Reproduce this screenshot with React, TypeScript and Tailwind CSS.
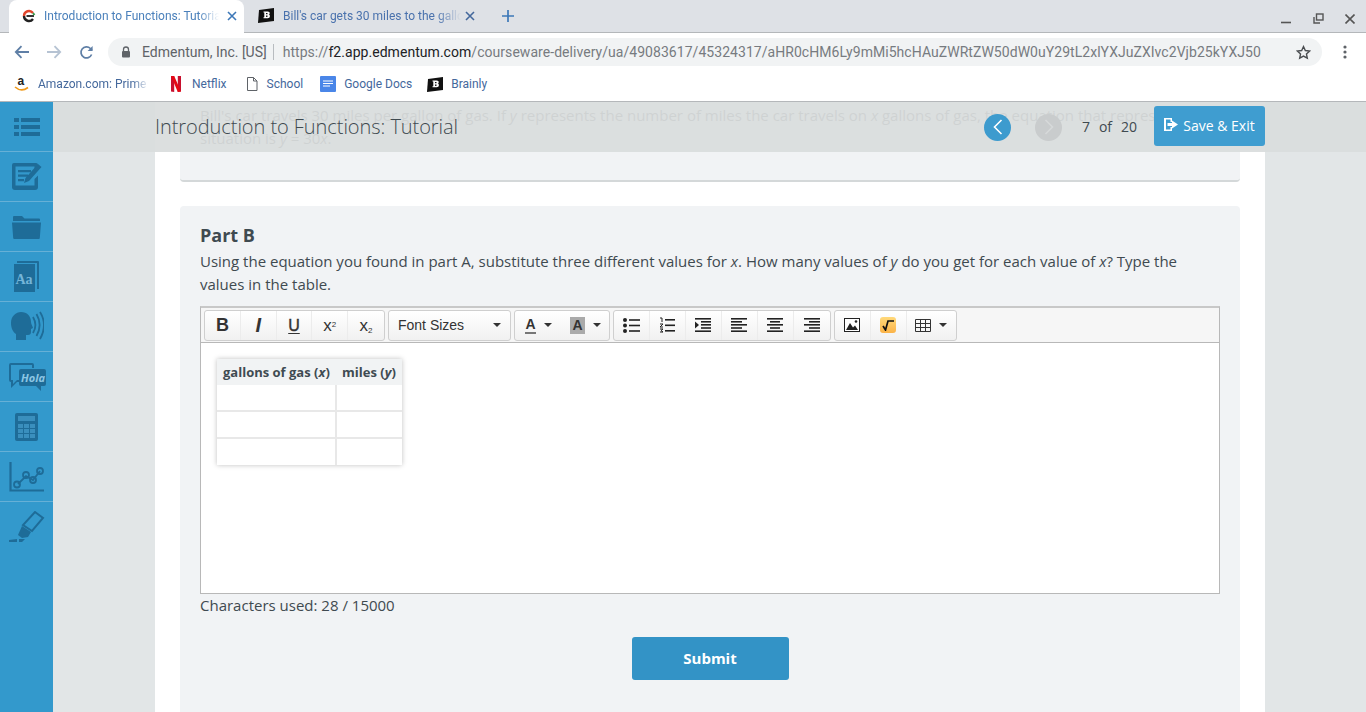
import { ReactNode } from "react";

const ui = "font-['Roboto',sans-serif]";
const page = "font-['Open_Sans',sans-serif]";
const DARK = "#1e6c98";

function BrainlyIcon() {
  return (
    <svg width="16" height="15" viewBox="0 0 16 15" className="shrink-0">
      <path d="M1 2 L16 0 V13 L0 15 Z" fill="#111" />
      <path d="M5.5 3.5h4.2c1.5 0 2 .8 2 1.7 0 .7-.4 1.2-1 1.4.8.2 1.2.8 1.2 1.6 0 1.2-.8 2-2.3 2H5.5v-1h.8V4.5h-.8z" fill="#fff" />
      <rect x="8" y="5" width="1.5" height="1.2" fill="#111" />
      <rect x="8" y="7.5" width="1.5" height="1.4" fill="#111" />
    </svg>
  );
}

function EdmentumIcon() {
  return (
    <svg width="14" height="14" viewBox="0 0 14 14" className="shrink-0">
      <path d="M2 7a5 5 0 0 1 9-3" fill="none" stroke="#e0452c" strokeWidth="2.4" />
      <path d="M2 7a5 5 0 0 0 9 3" fill="none" stroke="#222" strokeWidth="2.4" />
      <rect x="4.5" y="6" width="7.5" height="2" fill="#333" />
      <path d="M11 4l1.5 2" stroke="#3a9a4c" strokeWidth="2" />
    </svg>
  );
}

function CloseX({ color = "#3d78b8" }: { color?: string }) {
  return (
    <svg width="10" height="10" viewBox="0 0 10 10" className="shrink-0">
      <path d="M1 1l8 8M9 1l-8 8" stroke={color} strokeWidth="1.6" />
    </svg>
  );
}

function Tabs() {
  return (
    <div className={`flex h-[33px] items-end border-b border-[#b4b7ba] bg-[#dee1e6] ${ui}`}>
      <div className="relative top-px ml-[9px] flex h-[33px] w-[235px] items-center rounded-t-[8px] bg-white pb-[2px] pl-[13px]">
        <EdmentumIcon />
        <span className="ml-[8px] w-[175px] overflow-hidden whitespace-nowrap text-[12px] text-[#4a80bb] [mask-image:linear-gradient(to_right,black_88%,transparent)]">
          Introduction to Functions: Tutorial
        </span>
        <span className="ml-[8px]"><CloseX /></span>
      </div>
      <div className="flex h-[32px] w-[234px] items-center pb-[1px] pl-[14px]">
        <BrainlyIcon />
        <span className="ml-[9px] w-[178px] overflow-hidden whitespace-nowrap text-[12px] text-[#4a72ad] [mask-image:linear-gradient(to_right,black_86%,transparent)]">
          Bill's car gets 30 miles to the gallon
        </span>
        <span className="ml-[4px]"><CloseX color="#44689c" /></span>
      </div>
      <svg width="12" height="12" viewBox="0 0 12 12" className="mb-[10px] ml-[24px]">
        <path d="M6 0v12M0 6h12" stroke="#3d78b8" strokeWidth="1.7" />
      </svg>
      <div className="mb-[8px] ml-auto flex items-center gap-[21px] pr-[11px]">
        <svg width="11" height="11" viewBox="0 0 11 11"><path d="M0 9.5h10" stroke="#555" strokeWidth="1.6" /></svg>
        <svg width="11" height="11" viewBox="0 0 11 11" fill="none" stroke="#555" strokeWidth="1.4"><rect x="3.5" y="1" width="6.5" height="6" /><path d="M1 4v6h6" /></svg>
        <svg width="10" height="10" viewBox="0 0 10 10"><path d="M.5.5l9 9M9.5.5l-9 9" stroke="#555" strokeWidth="1.6" /></svg>
      </div>
    </div>
  );
}

function AddressBar() {
  return (
    <div className={`flex h-[36px] items-center bg-white pt-[2px] ${ui}`}>
      <svg width="16" height="14" viewBox="0 0 16 14" className="ml-[14px]" fill="none" stroke="#5f7fa6" strokeWidth="1.8">
        <path d="M15 7H2M7.5 1.2L1.8 7l5.7 5.8" />
      </svg>
      <svg width="16" height="14" viewBox="0 0 16 14" className="ml-[16px]" fill="none" stroke="#b6c3d3" strokeWidth="1.8">
        <path d="M1 7h13M8.5 1.2L14.2 7l-5.7 5.8" />
      </svg>
      <svg width="15" height="15" viewBox="0 0 15 15" className="ml-[17px]" fill="none" stroke="#5f7fa6" strokeWidth="1.7">
        <path d="M12.6 9.5A5.5 5.5 0 1 1 11.4 3.5L13 5" />
        <path d="M13.6 1v5h-5" fill="#5f7fa6" stroke="none" />
      </svg>
      <div className="ml-[14px] flex h-[28px] w-[1214px] items-center rounded-full bg-[#f1f3f4] pl-[13px] pr-[11px] text-[14px]">
        <svg width="10" height="12" viewBox="0 0 10 12" className="shrink-0">
          <path d="M2.5 5V3.5a2.5 2.5 0 0 1 5 0V5" fill="none" stroke="#5f6368" strokeWidth="1.3" />
          <rect x="1" y="5" width="8" height="6.5" rx="1" fill="#5f6368" />
        </svg>
        <span className="ml-[11px] whitespace-nowrap text-[#5f6368]">Edmentum, Inc. [US]</span>
        <span className="ml-[6px] mr-[9px] h-[16px] w-px shrink-0 bg-[#b8bcc0]" />
        <span className="min-w-0 flex-1 overflow-hidden whitespace-nowrap tracking-[0.045px] text-[#777b80]">
          https://<span className="text-[#202124]">f2.app.edmentum.com</span>/courseware-delivery/ua/49083617/45324317/aHR0cHM6Ly9mMi5hcHAuZWRtZW50dW0uY29tL2xlYXJuZXIvc2Vjb25kYXJ50
        </span>
        <svg width="15" height="15" viewBox="0 0 24 24" className="ml-[8px] shrink-0" fill="none" stroke="#4a4d50" strokeWidth="2.2">
          <path d="M12 2.500l2.900 6.300 6.900.800-5.100 4.700 1.400 6.800L12 17.700l-6.100 3.400 1.400-6.800-5.100-4.700 6.900-.800z" />
        </svg>
      </div>
      <svg width="4" height="14" viewBox="0 0 4 14" className="ml-[21px]" fill="#5f6368">
        <circle cx="2" cy="2" r="1.600" /><circle cx="2" cy="7" r="1.600" /><circle cx="2" cy="12" r="1.600" />
      </svg>
    </div>
  );
}

function Bookmark({ icon, label, className, fade }: { icon: ReactNode; label: string; className: string; fade?: boolean }) {
  return (
    <div className={`flex items-center ${className}`}>
      {icon}
      <span className={`whitespace-nowrap text-[12px] text-[#44689c] ${fade ? "w-[111px] overflow-hidden [mask-image:linear-gradient(to_right,black_85%,transparent)]" : ""}`}>{label}</span>
    </div>
  );
}

function Bookmarks() {
  return (
    <div className={`flex h-[33px] items-center border-b border-[#b4b7ba] bg-white pb-[2px] ${ui}`}>
      <Bookmark
        className="ml-[14px]"
        fade
        label="Amazon.com: Prime Video"
        icon={
          <svg width="16" height="18" viewBox="0 0 16 18" className="mr-[8px] shrink-0">
            <text x="3.5" y="10" fontSize="12" fontWeight="700" fill="#222" fontFamily="Liberation Sans">a</text>
            <path d="M1 12c4 3.5 9 3.5 13 .5" fill="none" stroke="#f09a1a" strokeWidth="1.6" />
          </svg>
        }
      />
      <Bookmark
        className="ml-[22px]"
        label="Netflix"
        icon={
          <svg width="10" height="16" viewBox="0 0 10 16" className="mr-[11px] shrink-0">
            <path d="M0 0h3.2v16L0 15.5zM6.8 0H10v15.5L6.8 16z" fill="#c8102e" />
            <path d="M0 0h3.2L10 15.5 6.8 16z" fill="#e50914" />
          </svg>
        }
      />
      <Bookmark
        className="ml-[19px]"
        label="School"
        icon={
          <svg width="12" height="14" viewBox="0 0 12 14" className="mr-[9px] shrink-0" fill="none" stroke="#5f6368" strokeWidth="1">
            <path d="M1.5 .5h6l3.5 3.500v9.500H1.500zM7.500 .5V4H11" />
          </svg>
        }
      />
      <Bookmark
        className="ml-[17px]"
        label="Google Docs"
        icon={
          <svg width="16" height="16" viewBox="0 0 16 16" className="mr-[8px] shrink-0">
            <rect width="16" height="16" rx="1" fill="#4a86e8" />
            <path d="M3 5h10M3 7.500h10M3 10h7" stroke="#fff" strokeWidth="1" />
          </svg>
        }
      />
      <Bookmark className="ml-[15px]" label="Brainly" icon={<span className="mr-[8px] flex"><BrainlyIcon /></span>} />
    </div>
  );
}

const sidebarIcons: ReactNode[] = [
  <svg width="26" height="18" viewBox="0 0 26 18" fill={DARK} key="list">
    <rect y="0" width="5" height="4" /><rect x="7" y="0" width="19" height="4" />
    <rect y="7" width="5" height="4" /><rect x="7" y="7" width="19" height="4" />
    <rect y="14" width="5" height="4" /><rect x="7" y="14" width="19" height="4" />
  </svg>,
  <svg width="31" height="29" viewBox="0 0 31 29" key="edit">
    <path d="M3 1h22a2 2 0 0 1 2 2v1l-3.500 3.500V4.500H4.500v19h19V17l3.500-3.500V25a3 3 0 0 1-3 3H4a3 3 0 0 1-3-3V3a2 2 0 0 1 2-2z" fill={DARK} />
    <path d="M7 8h13v2.200H7zM7 12.500h10v2.200H7zM7 17h6v2.200H7z" fill={DARK} />
    <path d="M27 2l3.500 3-12.500 14-5 2 1.500-5z" fill={DARK} />
  </svg>,
  <svg width="29" height="24" viewBox="0 0 29 24" fill={DARK} key="folder">
    <path d="M1 5V2a1 1 0 0 1 1-1h8l2.500 2.500H27a1 1 0 0 1 1 1V6H1z" />
    <path d="M0 7.500h29L27.800 23a1 1 0 0 1-1 1H2.200a1 1 0 0 1-1-1z" />
  </svg>,
  <svg width="27" height="32" viewBox="0 0 27 32" key="book">
    <path d="M4 0h21a1 1 0 0 1 1 1v27h-2V2H4z" fill={DARK} />
    <rect x="1" y="3" width="21" height="28" fill={DARK} />
    <text x="2.5" y="23" fontSize="14" fontWeight="700" fill="#74b5d8" fontFamily="Liberation Serif">Aa</text>
  </svg>,
  <svg width="35" height="31" viewBox="0 0 35 31" key="speak">
    <path d="M2 12C2 5 7 1 12 1c6 0 10 4 10 10 0 2 2 5 2 6l-2 1v3c0 2-1 3-3 3h-2v5H7v-6c-3-2-5-6-5-11z" fill={DARK} />
    <path d="M24 6c3 5 3 11 0 16M27.500 3c4 7 4 15 0 22M31 1c5 8 5 18 0 27" fill="none" stroke={DARK} strokeWidth="1.8" />
  </svg>,
  <svg width="38" height="30" viewBox="0 0 38 30" key="hola">
    <path d="M3 1h21a2 2 0 0 1 2 2v3h-2V3H3v15h2v4l4-4h2v2H9l-6 6v-6a2 2 0 0 1-2-2V3a2 2 0 0 1 2-2z" fill={DARK} />
    <path d="M13 7h23a2 2 0 0 1 2 2v13a2 2 0 0 1-2 2h-3v5l-5-5H13a2 2 0 0 1-2-2V9a2 2 0 0 1 2-2z" fill={DARK} />
    <text x="13" y="20" fontSize="11" fontWeight="700" fontStyle="italic" fill="#8cc6e4" fontFamily="Open Sans">Hola</text>
  </svg>,
  <svg width="23" height="28" viewBox="0 0 23 28" key="calc">
    <rect width="23" height="28" rx="2" fill={DARK} />
    <rect x="3" y="3" width="17" height="5" fill="#3a8fbd" />
    {[11, 16, 21].map((y) => [3, 9, 15].map((x) => <rect key={`${x}-${y}`} x={x} y={y} width="5" height="4" fill="#3a8fbd" />))}
  </svg>,
  <svg width="35" height="30" viewBox="0 0 35 30" fill="none" stroke={DARK} key="chart">
    <path d="M1.500 0v28.500H35" strokeWidth="2.200" />
    <path d="M9 22l8-8 7 4 7-9" strokeWidth="1.800" />
    <circle cx="8" cy="22.500" r="3" strokeWidth="1.800" /><circle cx="17" cy="13" r="3" strokeWidth="1.800" />
    <circle cx="24" cy="18" r="3" strokeWidth="1.800" /><circle cx="31" cy="9" r="3" strokeWidth="1.800" />
  </svg>,
  <svg width="36" height="32" viewBox="0 0 36 32" key="marker">
    <path d="M26 1l8 6-11 13-9-6z" fill="none" stroke={DARK} strokeWidth="2" />
    <path d="M13 15l9 6-3 5-6 1-4-3z" fill={DARK} />
    <path d="M0 29l8-1v3H0zM10 28h6l-3 3h-3z" fill={DARK} />
  </svg>,
];

function Sidebar() {
  return (
    <aside className="flex w-[53px] shrink-0 flex-col bg-[#3399cc]">
      {sidebarIcons.map((icon, i) => (
        <div key={i} className="flex h-[50px] shrink-0 items-center justify-center border-b border-[#66b0d6] last:border-b-0">
          {icon}
        </div>
      ))}
    </aside>
  );
}

function TopicHeader() {
  return (
    <div className={`absolute inset-x-0 top-0 flex h-[50px] items-center bg-[#d9dddd]/[0.93] pl-[102px] pr-[101px] ${page}`}>
      <h1 className="text-[20px] font-light tracking-[-0.06px] text-[#3f4a50]">Introduction to Functions: Tutorial</h1>
      <div className="ml-auto flex h-[27px] w-[27px] items-center justify-center rounded-full bg-[#3d9bce]">
        <svg width="10" height="16" viewBox="0 0 10 16" fill="none" stroke="#fff" strokeWidth="1.6"><path d="M8.500 1L1.500 8l7 7" /></svg>
      </div>
      <div className="ml-[24px] flex h-[27px] w-[27px] items-center justify-center rounded-full bg-[#c9cccd]">
        <svg width="10" height="16" viewBox="0 0 10 16" fill="none" stroke="#d6d9da" strokeWidth="1.6"><path d="M1.500 1l7 7-7 7" /></svg>
      </div>
      <div className="ml-[20px] flex w-[55px] justify-between pb-[2px] text-[14px] text-[#3f4a50]">
        <span>7</span><span>of</span><span>20</span>
      </div>
      <button className="ml-[17px] flex h-[40px] w-[111px] -translate-y-[1px] items-center justify-center gap-[5px] rounded-[3px] bg-[#3f9dd0] pb-[2px] text-[14px] text-white">
        <svg width="14" height="13" viewBox="0 0 14 13" fill="#fff" className="-mt-[2px]">
          <path d="M0 0h8v4H6.500V1.500H2v10h4.500V9H8v4H0z" />
          <path d="M3.500 5H8V2.500L14 6.500l-6 4V8H3.500z" />
        </svg>
        Save &amp; Exit
      </button>
    </div>
  );
}

function ToolBtn({ children, w = 36 }: { children: ReactNode; w?: number }) {
  return (
    <div style={{ width: w }} className="flex h-full items-center justify-center border-r border-[#ececec] last:border-r-0">
      {children}
    </div>
  );
}

function ToolGroup({ children }: { children: ReactNode }) {
  return (
    <div className="flex h-[31px] items-center rounded-[3px] border border-[#cfcfcf] bg-gradient-to-b from-white to-[#f1f1f1]">
      {children}
    </div>
  );
}

const Caret = () => <span className="ml-[8px] h-0 w-0 border-x-[4px] border-t-[4px] border-x-transparent border-t-[#333]" />;

function lines(ys: [number, number][], x = 0) {
  return ys.map(([y, w], i) => <rect key={i} x={x} y={y} width={w} height="1.600" fill="#222" />);
}

function Toolbar() {
  const glyph = "font-['Liberation_Sans',sans-serif] text-[#333]";
  return (
    <div className="flex h-[35px] items-center gap-[3px] border-b border-[#b8b8b8] bg-[#f6f6f6] pl-[3px]">
      <ToolGroup>
        <ToolBtn w={35.8}><span className={`${glyph} text-[18px] font-bold`}>B</span></ToolBtn>
        <ToolBtn w={35.8}><span className={`${glyph} text-[20px] font-bold italic`}>I</span></ToolBtn>
        <ToolBtn w={35.8}><span className={`${glyph} text-[16px] underline underline-offset-2 [-webkit-text-stroke:0.4px_#333]`}>U</span></ToolBtn>
        <ToolBtn w={35.8}><span className={`${glyph} text-[17px]`}>x<sup className="text-[8px]">2</sup></span></ToolBtn>
        <ToolBtn w={35.8}><span className={`${glyph} text-[17px]`}>x<sub className="text-[8px]">2</sub></span></ToolBtn>
      </ToolGroup>
      <ToolGroup>
        <div className={`flex w-[121px] items-center justify-between pl-[9px] pr-[9px] text-[14px] ${glyph}`}>
          Font Sizes <Caret />
        </div>
      </ToolGroup>
      <ToolGroup>
        <div className="flex w-[47px] items-center justify-center">
          <span className={`${glyph} border-b-2 border-[#777] text-[14px] font-bold leading-[15px]`}>A</span>
          <Caret />
        </div>
        <div className="flex w-[47px] items-center justify-center">
          <span className={`${glyph} bg-[#aaa] px-[2px] text-[14px] font-bold leading-[17px]`}>A</span>
          <Caret />
        </div>
      </ToolGroup>
      <ToolGroup>
        <ToolBtn>
          <svg width="17" height="15" viewBox="0 0 17 15">
            <circle cx="2" cy="2" r="2" fill="#222" /><circle cx="2" cy="7.500" r="2" fill="#222" /><circle cx="2" cy="13" r="2" fill="#222" />
            {lines([[1.200, 11], [6.700, 11], [12.200, 11]], 6)}
          </svg>
        </ToolBtn>
        <ToolBtn>
          <svg width="16" height="16" viewBox="0 0 16 16">
            <path d="M1 1h2v4M1 7h3L1 10h3M1 12h3L2 13.500 4 15H1" fill="none" stroke="#222" strokeWidth="1" />
            {lines([[2, 10], [7.500, 10], [13, 10]], 6)}
          </svg>
        </ToolBtn>
        <ToolBtn>
          <svg width="16" height="14" viewBox="0 0 16 14">
            {lines([[0, 16], [12.400, 16]])}
            {lines([[3, 10], [6, 10], [9.200, 10]], 6)}
            <path d="M0 3.500l4 3.500-4 3.500z" fill="#222" />
          </svg>
        </ToolBtn>
        <ToolBtn>
          <svg width="16" height="14" viewBox="0 0 16 14">{lines([[0, 16], [3, 11], [6, 16], [9.200, 11], [12.400, 16]])}</svg>
        </ToolBtn>
        <ToolBtn>
          <svg width="16" height="14" viewBox="0 0 16 14">
            {lines([[0, 16], [6, 16], [12.400, 16]])}
            {lines([[3, 10], [9.200, 10]], 3)}
          </svg>
        </ToolBtn>
        <ToolBtn>
          <svg width="16" height="14" viewBox="0 0 16 14">
            {lines([[0, 16], [6, 16], [12.400, 16]])}
            {lines([[3, 11], [9.200, 11]], 5)}
          </svg>
        </ToolBtn>
      </ToolGroup>
      <ToolGroup>
        <ToolBtn>
          <svg width="16" height="14" viewBox="0 0 16 14">
            <rect x=".5" y=".5" width="15" height="13" fill="#fff" stroke="#222" />
            <path d="M2 12l4-7 3 4.500 2-2 3 4.500z" fill="#222" /><circle cx="12" cy="3.500" r="1.300" fill="#222" />
          </svg>
        </ToolBtn>
        <ToolBtn>
          <div className="flex h-[16px] w-[16px] items-center justify-center rounded-[3px] bg-gradient-to-b from-[#ffd97a] to-[#fbb347]">
            <svg width="12" height="11" viewBox="0 0 12 11" fill="none" stroke="#111" strokeWidth="1.700"><path d="M1 6l2.500 4L6 1h6" /></svg>
          </div>
        </ToolBtn>
        <div className="flex w-[49px] items-center justify-center">
          <svg width="16" height="13" viewBox="0 0 16 13" fill="none" stroke="#333">
            <path d="M.5.500h15v12H.5zM.5 4.500h15M.5 8.500h15M5.500.5v12M10.500.5v12" />
          </svg>
          <Caret />
        </div>
      </ToolGroup>
    </div>
  );
}

function ValuesTable() {
  const rows = [0, 1, 2];
  return (
    <table className="ml-[16px] mt-[16px] w-[185px] table-fixed border-collapse shadow-[0_0_5px_rgba(0,0,0,0.25)]">
      <thead>
        <tr className="h-[26px] bg-[#f1f3f4] text-[13px] font-bold text-[#3f4b52]">
          <th className="w-[119px] pl-[6px] text-left font-bold">gallons of gas (<i>x</i>)</th>
          <th className="pl-[6px] text-left font-bold">miles (<i>y</i>)</th>
        </tr>
      </thead>
      <tbody>
        {rows.map((r) => (
          <tr key={r} className={r === 0 ? "h-[26px]" : "h-[27px] border-t-2 border-[#e8e8e8]"}>
            <td className="border-r-2 border-[#e8e8e8]" />
            <td />
          </tr>
        ))}
      </tbody>
    </table>
  );
}

export default function App() {
  return (
    <div className="flex h-[712px] flex-col overflow-hidden bg-white">
      <Tabs />
      <AddressBar />
      <Bookmarks />
      <div className="relative flex min-h-0 flex-1">
        <Sidebar />
        <div className="relative min-w-0 flex-1 overflow-hidden bg-[#e2e6e7] pl-[102px] pr-[101px]">
          <TopicHeader />
          <main className={`h-full bg-white px-[25px] ${page} text-[15px] leading-[23px] text-[#3f4a50]`}>
            <section className="h-[80px] rounded-b-[4px] border-b-2 border-[#d4d8d9] bg-[#f1f3f5] px-[20px] pt-[2px]">
              <p>
                Bill's car travels 30 miles per gallon of gas. If <i>y</i> represents the number of miles the car travels on <i>x</i> gallons of gas, the equation that represents this situation is <i>y</i> = 30<i>x</i>.
              </p>
            </section>
            <section className="mt-[24px] h-[560px] rounded-[4px] bg-[#f1f3f5] px-[20px] pt-[16px]">
              <h2 className="text-[18px] font-bold leading-[26px]">Part B</h2>
              <p className="mt-[2px]">
                Using the equation you found in part A, substitute three different values for <i>x</i>. How many values of <i>y</i> do you get for each value of <i>x</i>? Type the values in the table.
              </p>
              <div className="mt-[10px] h-[288px] border border-[#b8b8b8] border-t-2 border-t-[#c8c8c8] bg-white">
                <Toolbar />
                <ValuesTable />
              </div>
              <p>Characters used: 28 / 15000</p>
              <div className="mt-[20px] flex justify-center">
                <button className="h-[43px] w-[157px] rounded-[3px] bg-[#3393c6] text-[15px] font-bold text-white">Submit</button>
              </div>
            </section>
          </main>
        </div>
      </div>
    </div>
  );
}
